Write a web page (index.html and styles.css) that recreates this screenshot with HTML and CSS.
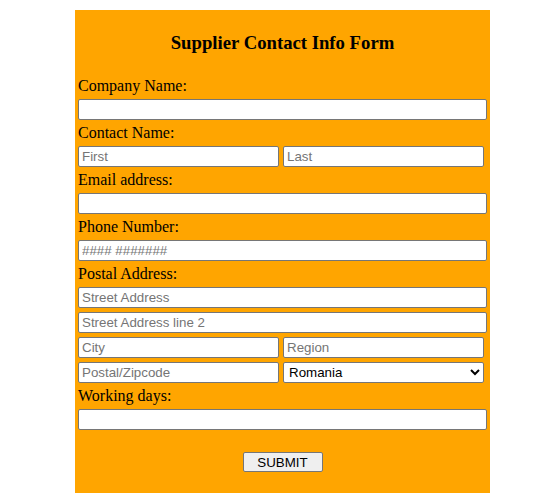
FILE: index.html
```html
<!DOCTYPE html>
<html>
<head>
<meta charset="utf-8">
<link rel="stylesheet" href="styles.css">
</head>
<body>
<form class="form">
  <h3 class="title">Supplier Contact Info Form</h3>
  <label class="label">Company Name:</label>
  <input class="field full" type="text">
  <label class="label">Contact Name:</label>
  <div class="pair">
    <input class="field half" type="text" placeholder="First">
    <input class="field half" type="text" placeholder="Last">
  </div>
  <label class="label">Email address:</label>
  <input class="field full" type="email">
  <label class="label">Phone Number:</label>
  <input class="field full" type="tel" placeholder="#### #######">
  <label class="label">Postal Address:</label>
  <input class="field full stack" type="text" placeholder="Street Address">
  <input class="field full stack" type="text" placeholder="Street Address line 2">
  <div class="pair stack">
    <input class="field half" type="text" placeholder="City">
    <input class="field half" type="text" placeholder="Region">
  </div>
  <div class="pair">
    <input class="field half" type="text" placeholder="Postal/Zipcode">
    <select class="field half select"><option>Romania</option></select>
  </div>
  <label class="label">Working days:</label>
  <input class="field full" type="text">
  <div class="actions">
    <button class="submit" type="button">SUBMIT</button>
  </div>
</form>
</body>
</html>
```

FILE: styles.css
```css
html, body {
  margin: 0;
  padding: 0;
  background: #ffffff;
}

.form {
  box-sizing: border-box;
  width: 415px;
  margin: 10px 0 0 75px;
  padding: 0 3px 21px 3px;
  background: #ffa500;
  display: flex;
  flex-direction: column;
  font-family: "Liberation Serif", "Times New Roman", serif;
  color: #000;
}

.title {
  margin: 22px 0 25px 0;
  font-size: 18.72px;
  line-height: 21px;
  font-weight: bold;
  text-align: center;
}

.label {
  display: block;
  font-size: 16px;
  line-height: 16px;
  height: 16px;
  margin: 0 0 5px 0;
}

.field {
  box-sizing: border-box;
  height: 21px;
  margin: 0 0 5px 0;
  padding: 1px 3px;
  border: 1px solid #767676;
  border-radius: 2px;
  background: #ffffff;
  font-family: "Liberation Sans", Arial, sans-serif;
  font-size: 13.33px;
  color: #000;
}

.field::placeholder {
  color: #757575;
}

.full {
  width: 409px;
}

.stack {
  margin-bottom: 4px;
}

.pair {
  display: flex;
  gap: 4px;
  margin: 0 0 5px 0;
}

.pair.stack {
  margin-bottom: 4px;
}

.pair .field {
  margin: 0;
}

.half {
  width: 201px;
}

.select {
  padding: 0 1px;
}

.actions {
  display: flex;
  justify-content: center;
  margin-top: 17px;
}

.submit {
  box-sizing: border-box;
  width: 80px;
  height: 20px;
  padding: 0 6px;
  border: 1px solid #767676;
  border-radius: 2px;
  background: #efefef;
  font-family: "Liberation Sans", Arial, sans-serif;
  font-size: 13.33px;
  color: #000;
}
```
